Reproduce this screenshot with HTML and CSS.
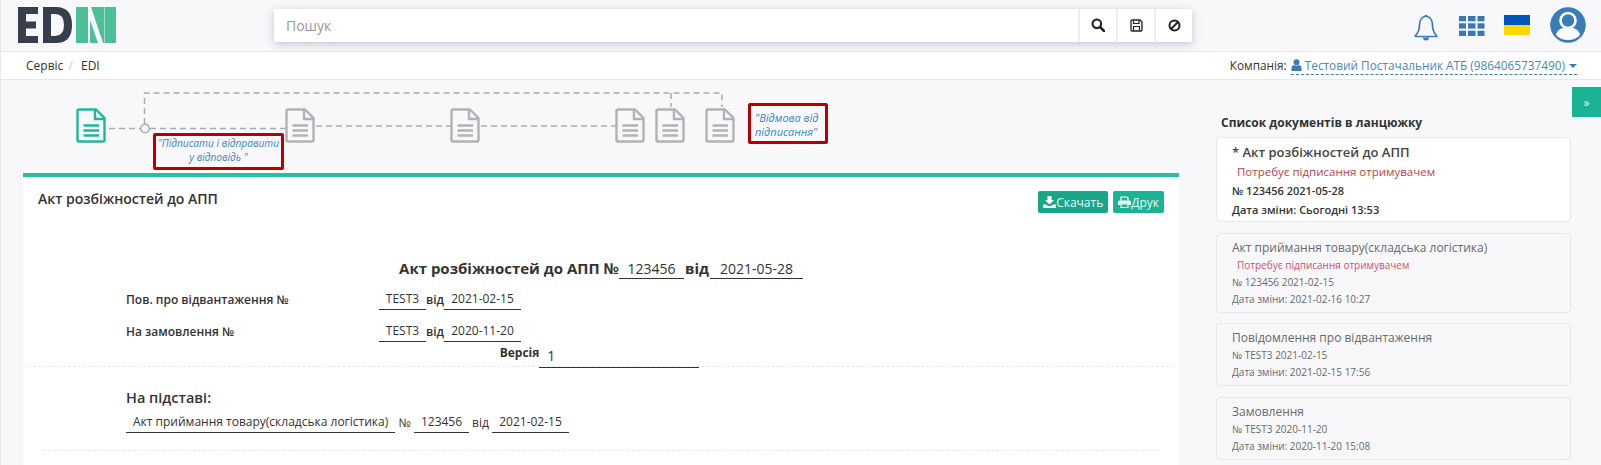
FILE: index.html
```html
<!DOCTYPE html>
<html lang="uk">

<head>
    <meta charset="UTF-8">
    <meta name="viewport" content="width=device-width, initial-scale=1.0">
    <title>EDI - Акт розбіжностей до АПП</title>

    <link rel="stylesheet" href="styles.css">
</head>

<body>
    <svg class="icon-defs" width="0" height="0">
        <symbol id="doc" viewBox="0 0 30 35">
            <path d="M1.5 3 Q1.5 1.5 3 1.5 H20 L28.5 10 V32 Q28.5 33.5 27 33.5 H3 Q1.5 33.5 1.5 32 Z" fill="none" stroke="currentColor" stroke-width="2.4" stroke-linejoin="round"/>
            <path d="M19 2 V11 H28" fill="none" stroke="currentColor" stroke-width="2.4"/>
            <path d="M7.5 17.5 H23 M7.5 22.5 H23 M7.5 27.5 H23" fill="none" stroke="currentColor" stroke-width="2.4"/>
        </symbol>
    </svg>

    <header class="topbar">
        <svg class="logo" width="98" height="36" viewBox="0 0 98 36">
            <path fill="#363f4b" d="M0 0 H20 V7 H8 V14.5 H18 V21.5 H8 V29 H20 V36 H0 Z"/>
            <path fill="#363f4b" fill-rule="evenodd" d="M25 0 H38 Q54 0 54 18 Q54 36 38 36 H25 Z M33 7 V29 H37 Q46 29 46 18 Q46 7 37 7 Z"/>
            <path fill="#4cbf98" d="M58 0 H70 V36 H58 Z M86.5 0 H98 V36 H86.5 Z"/>
            <path fill="#4cbf98" d="M73 0 H86 V36 H85 Z"/>
            <path fill="#4cbf98" d="M72 13 L80 36 H72 Z"/>
        </svg>
        <div class="search">
            <input class="search-input" type="text" placeholder="Пошук">
            <button class="search-btn" type="button">
                <svg width="14" height="14" viewBox="0 0 14 14"><circle cx="5.8" cy="5.8" r="4.3" fill="none" stroke="#222" stroke-width="2.1"/><path d="M9 9 L13 13" stroke="#222" stroke-width="2.5" stroke-linecap="round"/></svg>
            </button>
            <button class="search-btn" type="button">
                <svg width="13" height="13" viewBox="0 0 13 13"><path d="M1 2 Q1 1 2 1 H10 L12 3 V11 Q12 12 11 12 H2 Q1 12 1 11 Z" fill="none" stroke="#222" stroke-width="1.3"/><path d="M3.5 1.5 V4.5 H9 V1.5 M3.5 11.5 V7.5 H9.5 V11.5" fill="none" stroke="#222" stroke-width="1.2"/></svg>
            </button>
            <button class="search-btn" type="button">
                <svg width="13" height="13" viewBox="0 0 13 13"><circle cx="6.5" cy="6.5" r="5" fill="none" stroke="#222" stroke-width="2"/><path d="M3 10 L10 3" stroke="#222" stroke-width="2"/></svg>
            </button>
        </div>
        <div class="top-icons">
            <svg class="icon-bell" width="24" height="27" viewBox="0 0 24 27"><path d="M12 2 C7 3 5.5 6.5 5.5 11 C5.5 16 4 19 1.5 21.5 Q1 22.5 2 22.5 H22 Q23 22.5 22.5 21.5 C20 19 18.5 16 18.5 11 C18.5 6.5 17 3 12 2 Z" fill="none" stroke="#3a7cb8" stroke-width="1.7" stroke-linejoin="round"/><circle cx="12" cy="2" r="1.3" fill="#3a7cb8"/><path d="M9 23.5 A3 3 0 0 0 15 23.5 Z" fill="#3a7cb8"/></svg>
            <svg class="icon-apps" width="26" height="20" viewBox="0 0 26 20">
                <g fill="#3a78b5">
                    <rect x="0" y="0" width="7" height="5.3"/><rect x="9" y="0" width="7.5" height="5.3"/><rect x="18.5" y="0" width="7" height="5.3"/>
                    <rect x="0" y="7.3" width="7" height="5.3"/><rect x="9" y="7.3" width="7.5" height="5.3"/><rect x="18.5" y="7.3" width="7" height="5.3"/>
                    <rect x="0" y="14.7" width="7" height="5.3"/><rect x="9" y="14.7" width="7.5" height="5.3"/><rect x="18.5" y="14.7" width="7" height="5.3"/>
                </g>
            </svg>
            <span class="flag"></span>
            <svg class="icon-avatar" width="36" height="36" viewBox="0 0 36 36">
                <circle cx="18" cy="18" r="17.8" fill="#3a7cb8"/>
                <circle cx="18" cy="13.5" r="7.5" fill="none" stroke="#fff" stroke-width="2.6"/>
                <path d="M6 28 C7 23 11 21.5 13.5 21 Q18 23.5 22.5 21 C25 21.5 29 23 30 28 C27 31.5 23 33 18 33 C13 33 9 31.5 6 28 Z" fill="#fff"/>
            </svg>
        </div>
    </header>

    <nav class="crumbs">
        <div class="crumb-path">
            <span>Сервіс</span>
            <span class="crumb-sep">/</span>
            <span>EDI</span>
        </div>
        <div class="company">
            <span>Компанія:</span>
            <a class="company-link" href="#">
                <svg width="11" height="12" viewBox="0 0 11 12"><circle cx="5.5" cy="3.2" r="3" fill="#3a7cb8"/><path d="M0.5 12 V9 Q0.5 6.5 3 6 Q5.5 7.5 8 6 Q10.5 6.5 10.5 9 V12 Z" fill="#3a7cb8"/></svg>
                Тестовий Постачальник АТБ (9864065737490)
                <i class="caret"></i>
            </a>
        </div>
    </nav>

    <div class="page">
        <main class="content">
            <div class="chain">
                <svg class="chain-lines" width="760" height="93">
                    <g fill="none" stroke="#a9adb0" stroke-width="1.5" stroke-dasharray="6 4">
                        <path d="M143.5 44 V13 H721 V27"/>
                        <path d="M670 13 V27"/>
                        <path d="M108 48.5 H139"/>
                        <path d="M149 48.5 H285"/>
                        <path d="M315 46 H450"/>
                        <path d="M480 46 H615"/>
                    </g>
                    <circle cx="144" cy="48.5" r="4.3" fill="#f8f8fb" stroke="#a9adb0" stroke-width="1.5"/>
                </svg>
                <svg class="chain-doc doc-active doc-1"><use href="#doc"/></svg>
                <svg class="chain-doc doc-2"><use href="#doc"/></svg>
                <svg class="chain-doc doc-3"><use href="#doc"/></svg>
                <svg class="chain-doc doc-4"><use href="#doc"/></svg>
                <svg class="chain-doc doc-5"><use href="#doc"/></svg>
                <svg class="chain-doc doc-6"><use href="#doc"/></svg>
                <div class="chain-note note-sign">"Підписати і відправити<br>у відповідь "</div>
                <div class="chain-note note-refuse">"Відмова від<br>підписання"</div>
            </div>

            <section class="doc-card">
                <div class="doc-head">
                    <h2 class="doc-head-title">Акт розбіжностей до АПП</h2>
                    <div class="doc-actions">
                        <button class="btn btn-dark" type="button">
                            <svg width="13" height="12" viewBox="0 0 13 12"><path d="M4.5 0 H8.5 V4 H11 L6.5 8.5 L2 4 H4.5 Z" fill="#fff"/><path d="M0 8.5 H3 L5 10 H8 L10 8.5 H13 V12 H0 Z" fill="#fff"/></svg>Скачать
                        </button>
                        <button class="btn" type="button">
                            <svg width="13" height="12" viewBox="0 0 13 12"><path d="M3 4.5 V1 H9 L10 2 V4.5" fill="none" stroke="#fff" stroke-width="1.2"/><path d="M0 6 Q0 4.5 1.5 4.5 H11.5 Q13 4.5 13 6 V9 H10.5 V7.5 H2.5 V9 H0 Z" fill="#fff"/><path d="M3 8 H10 V11.5 H3 Z" fill="none" stroke="#fff" stroke-width="1.1"/></svg>Друк
                        </button>
                    </div>
                </div>

                <h1 class="act-title">
                    Акт розбіжностей до АПП №<span class="fill fill-num">123456</span><span class="act-from">від</span><span class="fill fill-date">2021-05-28</span>
                </h1>

                <div class="ref-row">
                    <span class="ref-label">Пов. про відвантаження №</span>
                    <span class="fill fill-test">TEST3</span>
                    <span class="ref-from">від</span>
                    <span class="fill fill-refdate">2021-02-15</span>
                </div>
                <div class="ref-row ref-row-2">
                    <span class="ref-label">На замовлення №</span>
                    <span class="fill fill-test">TEST3</span>
                    <span class="ref-from">від</span>
                    <span class="fill fill-refdate">2020-11-20</span>
                </div>

                <div class="version">
                    <b class="version-label">Версія</b>
                    <span class="fill fill-version">1</span>
                </div>
                <hr class="dash dash-wide">

                <h3 class="basis-title">На підставі:</h3>
                <div class="basis-row">
                    <span class="fill fill-basis">Акт приймання товару(складська логістика)</span>
                    <span class="basis-no">№</span>
                    <span class="fill fill-basisnum">123456</span>
                    <span class="basis-from">від</span>
                    <span class="fill fill-refdate">2021-02-15</span>
                </div>
                <hr class="dash dash-narrow">
            </section>
        </main>

        <aside class="side">
            <button class="side-toggle" type="button">»</button>
            <h4 class="side-title">Список документів в ланцюжку</h4>

            <div class="chain-card chain-card-current">
                <div class="chain-card-name">* Акт розбіжностей до АПП</div>
                <div class="chain-card-status">Потребує підписання отримувачем</div>
                <div class="chain-card-line">№ 123456 2021-05-28</div>
                <div class="chain-card-line">Дата зміни: Сьогодні 13:53</div>
            </div>

            <div class="chain-card">
                <div class="chain-card-name">Акт приймання товару(складська логістика)</div>
                <div class="chain-card-status">Потребує підписання отримувачем</div>
                <div class="chain-card-line">№ 123456 2021-02-15</div>
                <div class="chain-card-line">Дата зміни: 2021-02-16 10:27</div>
            </div>

            <div class="chain-card">
                <div class="chain-card-name">Повідомлення про відвантаження</div>
                <div class="chain-card-line">№ TEST3 2021-02-15</div>
                <div class="chain-card-line">Дата зміни: 2021-02-15 17:56</div>
            </div>

            <div class="chain-card">
                <div class="chain-card-name">Замовлення</div>
                <div class="chain-card-line">№ TEST3 2020-11-20</div>
                <div class="chain-card-line">Дата зміни: 2020-11-20 15:08</div>
            </div>
        </aside>
    </div>
</body>

</html>
```

FILE: styles.css
```css
* {
    box-sizing: border-box;
}

html,
body {
    height: 465px;
    overflow: hidden;
}

body {
    margin: 0;
    background: #f8f8fb;
    border-left: 1px solid #e7e7ec;
    color: #333;
    font-family: "Open Sans", "Noto Sans", sans-serif;
    font-size: 12px;
}

.icon-defs {
    position: absolute;
}

/* top bar */
.topbar {
    display: flex;
    align-items: center;
    height: 52px;
    border-bottom: 1px solid #e7e7ec;
    padding-left: 17px;
}

.logo {
    display: block;
    margin-top: -1px;
}

.search {
    display: flex;
    height: 33px;
    width: 918px;
    margin-left: 158px;
    margin-top: -1px;
    background: #fff;
    box-shadow: 0 2px 8px rgba(70, 70, 100, 0.3);
}

.search-input {
    flex: 1;
    min-width: 0;
    border: 0;
    outline: 0;
    padding: 0 12px;
    font: 14px "Open Sans", sans-serif;
    background: transparent;
}

.search-input::placeholder {
    color: #9a9a9a;
}

.search-btn {
    display: flex;
    align-items: center;
    justify-content: center;
    width: 38px;
    padding: 0;
    border: 0;
    border-left: 2px solid #eeeef0;
    background: #fff;
}

.top-icons {
    display: flex;
    align-items: center;
    margin-left: 222px;
    margin-top: -2px;
}

.icon-bell {
    margin-top: 5px;
}

.icon-apps {
    margin: 3px 0 0 21px;
}

.flag {
    width: 26px;
    height: 20px;
    margin: 1px 0 0 19px;
    background: linear-gradient(#0057b7 50%, #ffd700 50%);
}

.icon-avatar {
    margin-left: 20px;
}

/* breadcrumb */
.crumbs {
    display: flex;
    justify-content: space-between;
    align-items: center;
    height: 28px;
    background: #fff;
    border-bottom: 1px solid #e7e7ec;
    padding: 0 24px 0 25px;
}

.crumb-sep {
    margin: 0 5px 0 2px;
    color: #ccc;
}

.company {
    font-size: 11.8px;
}

.company-link {
    display: inline-block;
    border-bottom: 1px dashed #3a7cb8;
    color: #4a86c0;
    text-decoration: none;
    line-height: 17px;
    margin-left: 1px;
}

.company-link svg {
    vertical-align: -1px;
}

.caret {
    display: inline-block;
    margin-left: 1px;
    vertical-align: 2px;
    border-top: 4px solid #3a7cb8;
    border-left: 4px solid transparent;
    border-right: 4px solid transparent;
}

/* page */
.page {
    display: flex;
    height: 385px;
}

.content {
    width: 1156px;
    margin-left: 22px;
}

.side {
    position: relative;
    flex: 1;
    padding-left: 37px;
}

/* chain diagram */
.chain {
    position: relative;
    height: 93px;
}

.chain-lines {
    position: absolute;
    left: -22px;
    top: 0;
}

.chain-doc {
    position: absolute;
    top: 28px;
    width: 30px;
    height: 35px;
    color: #b0b3b5;
}

.doc-active {
    color: #1cb998;
}

.doc-1 { left: 53px; }
.doc-2 { left: 262px; }
.doc-3 { left: 427px; }
.doc-4 { left: 592px; }
.doc-5 { left: 632px; }
.doc-6 { left: 682px; }

.chain-note {
    position: absolute;
    border: 3px solid #b80000;
    border-radius: 2px;
    color: #3a86c8;
    font-size: 11px;
    font-style: italic;
    line-height: 14px;
    white-space: nowrap;
}

.note-sign {
    left: 130px;
    top: 53px;
    width: 131px;
    height: 37px;
    text-align: center;
    font-size: 10.2px;
}

.note-refuse {
    left: 725px;
    top: 23px;
    width: 80px;
    height: 41px;
    padding: 5px 0 0 4px;
}

/* document */
.doc-card {
    height: 292px;
    background: #fff;
    border-top: 4px solid #1fc3a2;
    overflow: hidden;
}

.doc-head {
    display: flex;
    justify-content: space-between;
    padding: 13px 15px 0;
    height: 62px;
}

.doc-head-title {
    margin: 0;
    font-size: 14px;
    font-weight: 600;
    line-height: 18px;
    color: #333;
}

.doc-actions {
    display: flex;
    gap: 5px;
    padding-top: 1px;
}

.btn {
    display: flex;
    align-items: center;
    height: 22px;
    padding: 0 5px;
    border: 0;
    border-radius: 2px;
    background: #1ab394;
    color: #e8f7f3;
    font: 12px "Open Sans", sans-serif;
}

.btn-dark {
    background: #18a689;
}

.act-title {
    margin: 19px 0 0;
    text-align: center;
    font-size: 15px;
    font-weight: 700;
    line-height: 20px;
    color: #333;
}

.act-from {
    margin: 0 1px;
}

.fill {
    display: inline-block;
    border-bottom: 1px solid #333;
    font-weight: 400;
    text-align: center;
    color: #333;
}

.fill-num {
    width: 65px;
    font-size: 14px;
    line-height: 19px;
}

.fill-date {
    width: 93px;
    font-size: 14px;
    line-height: 19px;
}

.ref-row {
    display: flex;
    align-items: flex-end;
    margin: 10px 0 0 103px;
    line-height: 20px;
}

.ref-row-2 {
    margin-top: 11px;
}

.ref-label {
    width: 253px;
    font-weight: 600;
    font-size: 12px;
}

.fill-test {
    width: 47px;
}

.ref-from {
    width: 18px;
    text-align: center;
    font-weight: 600;
}

.fill-refdate {
    width: 77px;
}

.version {
    display: flex;
    justify-content: center;
    align-items: flex-end;
    margin: 2px 0 0;
    height: 24px;
    padding-right: 3px;
}

.version-label {
    align-self: flex-start;
    font-weight: 700;
    line-height: 18px;
}

.fill-version {
    width: 160px;
    text-align: left;
    padding-left: 8px;
    font-size: 14px;
    line-height: 22px;
}

.dash {
    border: 0;
    border-top: 1px dashed #e7eaec;
    margin: 0;
}

.dash-wide {
    margin: -2px 5px 0;
}

.basis-title {
    margin: 21px 0 0 103px;
    font-size: 14.5px;
    font-weight: 600;
    line-height: 20px;
}

.basis-row {
    display: flex;
    align-items: flex-end;
    margin: 4px 0 0 103px;
    line-height: 20px;
}

.fill-basis {
    width: 269px;
    padding-left: 7px;
    text-align: left;
}

.basis-no {
    width: 19px;
    text-align: center;
}

.fill-basisnum {
    width: 55px;
}

.basis-from {
    width: 23px;
    text-align: center;
}

.dash-narrow {
    margin: 17px 20px 0;
}

/* side list */
.side-toggle {
    position: absolute;
    top: 7px;
    right: 0;
    width: 29px;
    height: 30px;
    padding: 0;
    border: 0;
    background: #1ab394;
    color: #e8f7f3;
    font: 12px "Open Sans", sans-serif;
}

.side-title {
    margin: 34px 0 6px 5px;
    font-size: 12px;
    font-weight: 700;
    line-height: 17px;
    color: #333;
}

.chain-card {
    width: 355px;
    margin-bottom: 10.5px;
    padding: 4px 15px;
    border: 1px solid #e7e7ec;
    border-radius: 4px;
    color: #676a6c;
    font-size: 10px;
    line-height: 17px;
}

.chain-card-name {
    font-size: 12px;
    line-height: 19px;
}

.chain-card-status {
    padding-left: 5px;
    color: #d0506a;
}

.chain-card-current {
    height: 85px;
    background: #fff;
    padding-top: 5px;
    color: #333;
    font-size: 11px;
    line-height: 19px;
}

.chain-card-current .chain-card-name {
    font-size: 13px;
    font-weight: 600;
    color: #444;
}

.chain-card-current .chain-card-status {
    color: #c0404f;
    font-size: 11.5px;
    font-weight: 400;
}

.chain-card-current .chain-card-line {
    font-weight: 600;
}
```
